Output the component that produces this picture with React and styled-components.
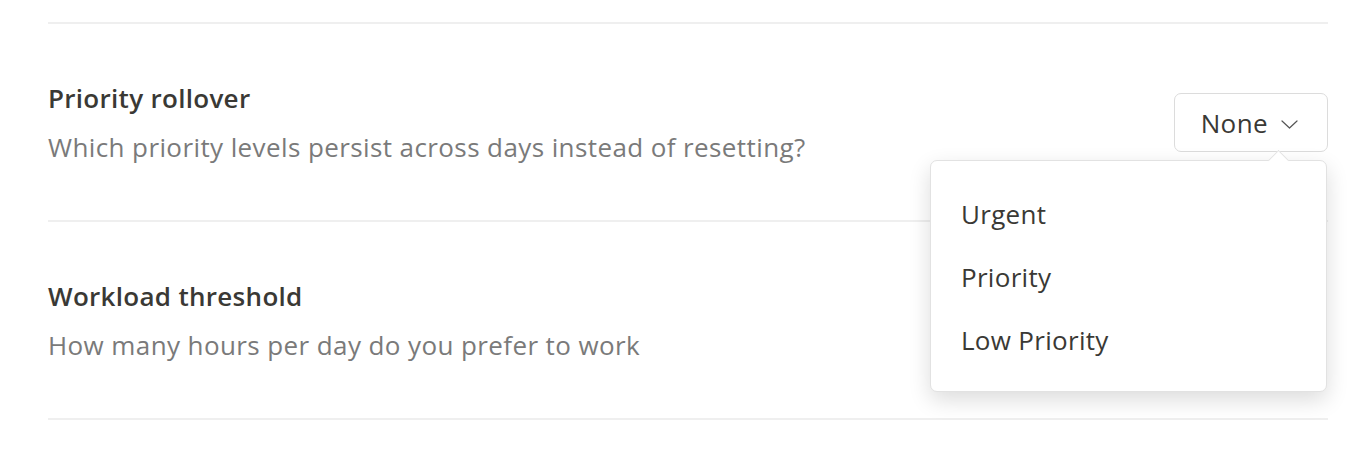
import React, {useState} from 'react';
import styled, {createGlobalStyle} from "styled-components";

const GlobalStyle = createGlobalStyle`
    body
    {
        margin: 0;
        background: #fff;
        font-family: "Open Sans", Lato, sans-serif;
    }
`;

const options = ['Urgent', 'Priority', 'Low Priority'];

function Chevron()
{
    return (
        <svg width="17" height="9" viewBox="0 0 17 9" fill="none">
            <path d="M1 1l7.5 7 7.5-7" stroke="#555" strokeWidth="1.2" strokeLinecap="round" strokeLinejoin="round"/>
        </svg>
    );
}

function App()
{
    const [open, setOpen] = useState(true);
    const [value, setValue] = useState('None');

    return (
        <>
            <GlobalStyle/>
            <Page>
                <Setting>
                    <Text>
                        <h3>Priority rollover</h3>
                        <p>Which priority levels persist across days instead of resetting?</p>
                    </Text>
                    <SelectWrap>
                        <SelectButton onClick={() => setOpen(!open)}>
                            <span>{value}</span>
                            <Chevron/>
                        </SelectButton>
                        {open && (
                            <Menu>
                                {options.map(o => (
                                    <MenuItem key={o} onClick={() => { setValue(o); setOpen(false); }}>{o}</MenuItem>
                                ))}
                            </Menu>
                        )}
                    </SelectWrap>
                </Setting>
                <Setting>
                    <Text>
                        <h3>Workload threshold</h3>
                        <p>How many hours per day do you prefer to work</p>
                    </Text>
                </Setting>
            </Page>
        </>
    );
}

const Page = styled.div`
    padding: 22px 42px 0 48px;
`;

const Setting = styled.div`
    display: flex;
    align-items: center;
    justify-content: space-between;
    height: 196px;
    border-top: 2px solid #efefef;

    &:last-child
    {
        border-bottom: 2px solid #efefef;
    }
`;

const Text = styled.div`
    display: flex;
    flex-direction: column;
    gap: 15px;

    h3
    {
        margin: 0;
        font-size: 26px;
        line-height: 34px;
        font-weight: 600;
        color: #3a3935;
        letter-spacing: 0.3px;
    }

    p
    {
        margin: 0;
        font-size: 26px;
        line-height: 34px;
        color: #7a7a7a;
        letter-spacing: 0.4px;
    }
`;

const SelectWrap = styled.div`
    position: relative;
    align-self: flex-start;
    margin-top: 69px;
`;

const SelectButton = styled.button`
    display: flex;
    align-items: center;
    gap: 13px;
    height: 59px;
    padding: 0 29px 0 26px;
    background: #fff;
    border: 1px solid #dcdcdc;
    border-radius: 7px;
    font-family: inherit;
    font-size: 26px;
    letter-spacing: 0.4px;
    color: #3a3935;
    cursor: pointer;

    svg
    {
        margin-top: 3px;
    }
`;

const Menu = styled.div`
    position: absolute;
    top: 67px;
    right: 1px;
    width: 397px;
    box-sizing: border-box;
    padding: 21px 0 20px;
    background: #fff;
    border: 1px solid #e2e2e2;
    border-radius: 7px;
    box-shadow: 0 8px 22px rgba(0, 0, 0, 0.14);

    &::before
    {
        content: '';
        position: absolute;
        top: -8px;
        right: 40px;
        width: 14px;
        height: 14px;
        background: #fff;
        border-top: 1px solid #e2e2e2;
        border-left: 1px solid #e2e2e2;
        transform: rotate(45deg);
    }
`;

const MenuItem = styled.div`
    position: relative;
    height: 63px;
    display: flex;
    align-items: center;
    padding-left: 30px;
    font-size: 26px;
    letter-spacing: 0.3px;
    color: #3a3935;
    cursor: pointer;
`;

export default App;
